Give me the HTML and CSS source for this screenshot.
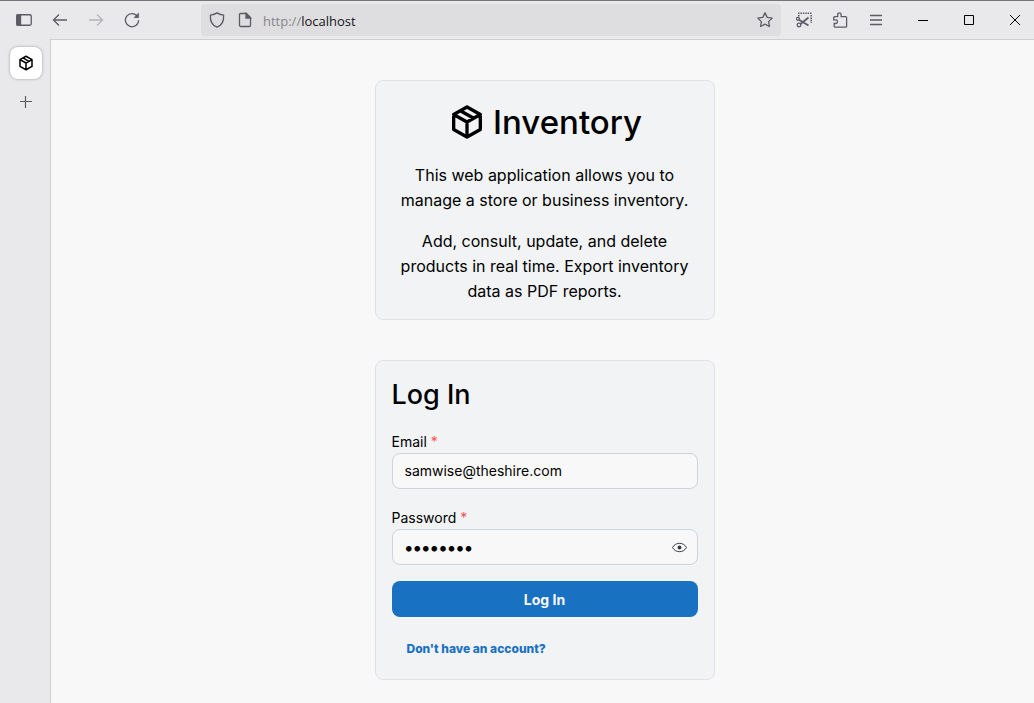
FILE: index.html
```html
<!DOCTYPE html>
<html lang="en">
<head>
<meta charset="utf-8">
<title>Inventory</title>
<link rel="stylesheet" href="styles.css">
</head>
<body>
<svg class="defs" aria-hidden="true">
  <symbol id="package" viewBox="0 0 24 24"><path d="M12 3l8 4.500v9L12 21l-8-4.500v-9L12 3M12 12l8-4.500M12 12v9M12 12L4 7.500M8 5.250l8 4.500"/></symbol>
</svg>
<div class="browser">
  <header class="toolbar">
    <nav class="nav-buttons" aria-label="Navigation">
      <button class="icon-button" aria-label="Toggle sidebar"><svg class="icon" viewBox="0 0 16 16"><rect x=".75" y="2.750" width="14.500" height="10.500" rx="1.500"/><path d="M1 3h3.500v10H1z" fill="currentColor"/></svg></button>
      <button class="icon-button" aria-label="Back"><svg class="icon" viewBox="0 0 16 16"><path d="M15 8H2M7 2.500L1.500 8 7 13.500"/></svg></button>
      <button class="icon-button muted" aria-label="Forward" disabled><svg class="icon" viewBox="0 0 16 16"><path d="M1 8h13M9 2.500L14.500 8 9 13.500"/></svg></button>
      <button class="icon-button" aria-label="Reload"><svg class="icon" viewBox="0 0 16 16"><path d="M13.500 4.500A6.600 6.600 0 1 0 14.600 8.200"/><path d="M14.600 1v4.700H9.900z" fill="currentColor" stroke-width=".5"/></svg></button>
    </nav>
    <div class="address-bar">
      <button class="site-button" aria-label="Tracking protection"><svg class="icon" viewBox="0 0 16 16"><path d="M8 .9c1.800 1.300 4 1.900 6.600 2.300.4 5.300-1.400 9.900-6.600 12C2.800 13.100 1 8.500 1.400 3.200 4 2.800 6.200 2.200 8 .9z"/></svg></button>
      <button class="site-button" aria-label="Site information"><svg class="icon" viewBox="0 0 16 16"><path d="M3.500 1.500h6l4 4v7.700a1.300 1.300 0 0 1-1.300 1.300H3.800a1.300 1.300 0 0 1-1.300-1.300V2.500a1 1 0 0 1 1-1z"/><path d="M9 1.500v4.500h4.500z" fill="currentColor"/></svg></button>
      <div class="url" role="textbox" contenteditable="true" spellcheck="false" aria-label="Address"><span class="scheme">http://</span>localhost</div>
      <button class="site-button" aria-label="Bookmark"><svg class="icon" viewBox="0 0 16 16"><path d="M8 .9l2.200 4.500 5 .7-3.600 3.500.8 4.900L8 12.200l-4.400 2.300.8-4.900L.8 6.100l5-.7z" stroke-linejoin="round"/></svg></button>
    </div>
    <div class="tools">
      <button class="icon-button" aria-label="Screenshot"><svg class="icon" viewBox="0 0 16 16"><path d="M2 1.200h14M15.200 3v8M2.800 3v2" stroke-width="1.600" stroke-dasharray="1.500 .9"/><circle cx="1.900" cy="6.800" r="1.500"/><circle cx="3" cy="13" r="1.800"/><path d="M3 7.800l9.500 5.700M4.500 12l8-6.500" stroke-width="1.800"/></svg></button>
      <button class="icon-button" aria-label="Extensions"><svg class="icon" viewBox="0 0 16 16"><path d="M2.700 4.700h3V2.500a1.700 1.700 0 0 1 3.400 0v2.200h4.500a1 1 0 0 1 1 1v8.500a1 1 0 0 1-1 1H3.200a1 1 0 0 1-1-1v-2.700h1.500a1.800 1.800 0 0 0 0-3.600H1.700V5.700a1 1 0 0 1 1-1z"/></svg></button>
      <button class="icon-button" aria-label="Menu"><svg class="icon" viewBox="0 0 16 16"><path d="M2 3.500h12M2 8h12M2 12.500h12"/></svg></button>
    </div>
    <div class="window-buttons">
      <button class="window-button" aria-label="Minimize"><svg class="window-icon" viewBox="0 0 10 10"><path d="M0 5.500h10"/></svg></button>
      <button class="window-button" aria-label="Maximize"><svg class="window-icon" viewBox="0 0 10 10"><path d="M.5.500h9v9h-9z"/></svg></button>
      <button class="window-button" aria-label="Close"><svg class="window-icon" viewBox="0 0 10 10"><path d="M0 0l10 10M10 0L0 10"/></svg></button>
    </div>
  </header>
  <div class="workspace">
    <aside class="tab-strip">
      <button class="tab" aria-label="Inventory"><svg class="package-icon small"><use href="#package"/></svg></button>
      <button class="new-tab" aria-label="New tab"><svg class="new-icon" viewBox="0 0 12 12"><path d="M5.500 0v12M0 5.500h12"/></svg></button>
    </aside>
    <main class="page">
      <section class="card intro">
        <h1 class="title"><svg class="package-icon large"><use href="#package"/></svg>Inventory</h1>
        <p class="description">This web application allows you to manage a store or business inventory.</p>
        <p class="description">Add, consult, update, and delete products in real time. Export inventory data as PDF reports.</p>
      </section>
      <form class="card login">
        <h2 class="form-title">Log In</h2>
        <div class="field">
          <label class="label" for="email">Email <span class="required">*</span></label>
          <input class="input" id="email" type="email" value="samwise@theshire.com" required>
        </div>
        <div class="field">
          <label class="label" for="password">Password <span class="required">*</span></label>
          <div class="input password-box">
            <input class="password" id="password" type="password" value="potatoes" required>
            <button class="reveal" type="button" aria-label="Show password"><svg class="eye" viewBox="0 0 15 15"><path d="M.5 7.500C2.200 4.600 4.700 3.300 7.500 3.300s5.300 1.300 7 4.200c-1.700 2.900-4.200 4.200-7 4.200S2.200 10.400.5 7.500z"/><circle cx="7.500" cy="7.500" r="1.900" fill="currentColor" stroke="none"/></svg></button>
          </div>
        </div>
        <button class="submit" type="submit">Log In</button>
        <a class="register" href="#register">Don't have an account?</a>
      </form>
    </main>
  </div>
</div>
</body>
</html>
```
FILE: styles.css
```css
* { box-sizing: border-box; }
body { margin: 0; background: #e9e9eb; font-family: Inter, "Liberation Sans", sans-serif; color: #000; }
button, input { font: inherit; color: inherit; }
button { display: flex; align-items: center; justify-content: center; padding: 0; border: 0; background: transparent; }
svg { display: block; fill: none; stroke: currentColor; }
.defs { display: none; }
.browser { display: flex; flex-direction: column; min-height: 100vh; }

.toolbar { display: flex; align-items: center; height: 39px; border-top: 1px solid #76747b; color: #5b5b66; }
.nav-buttons { display: flex; padding-left: 6px; margin-right: 51px; }
.icon-button { width: 36px; height: 32px; }
.muted { color: #b4b4ba; }
.icon { width: 16px; height: 16px; stroke-width: 1.3; }
.address-bar { display: flex; flex: 1; align-items: center; height: 32px; padding: 0 2px; border-radius: 4px; background: #dedee0; }
.site-button { width: 28px; height: 28px; }
.url { flex: 1; padding: 2px 0 0 4px; font: 13px/20px "Open Sans", "Noto Sans", sans-serif; color: #15141a; outline: 0; }
.scheme { color: #86868b; }
.tools { display: flex; padding: 0 6px 0 5px; }
.window-buttons { display: flex; margin-right: -4px; color: #000; }
.window-button { width: 46px; height: 38px; }
.window-icon { width: 10px; height: 10px; stroke-width: 1; overflow: visible; }

.workspace { display: flex; flex: 1; }
.tab-strip { display: flex; flex-direction: column; align-items: center; gap: 7px; width: 50px; padding: 8px 0 0 2px; }
.tab { width: 32px; height: 32px; border-radius: 8px; background: #fff; box-shadow: 0 0 3px rgba(0, 0, 0, .35); }
.new-tab { width: 32px; height: 32px; color: #5b5b66; }
.new-icon { width: 12px; height: 12px; stroke-width: 1.2; }
.package-icon { stroke-width: 2; stroke-linecap: round; stroke-linejoin: round; }
.small { width: 18px; height: 18px; }
.large { width: 40px; height: 40px; }

.page { display: flex; flex: 1; flex-direction: column; align-items: center; gap: 40px; padding: 40px 16px 22px 20px; border: solid #cfcfd1; border-width: 1px 0 0 1px; background: #f8f8f8; }
.card { width: 100%; max-width: 340px; padding: 16px; border: 1px solid #dee2e6; border-radius: 8px; background: #f1f3f5; }
.intro { display: flex; flex-direction: column; gap: 16px; padding-bottom: 15px; text-align: center; }
.title { display: flex; align-items: center; justify-content: center; gap: 6px; margin: 0; font-size: 33px; font-weight: 500; line-height: 50px; }
.description { margin: 0; font-size: 16px; line-height: 25px; }
.login { display: flex; flex-direction: column; gap: 16px; }
.form-title { margin: 0; font-size: 27px; font-weight: 500; line-height: 36px; }
.field { display: flex; flex-direction: column; padding-top: 2px; }
.label { font-size: 14px; line-height: 22px; }
.required { color: #fa5252; }
.input { width: 100%; height: 36px; padding: 0 12px 1px; border: 1px solid #ced4da; border-radius: 8px; background: #f8f8f8; font-size: 14px; outline: 0; }
.password-box { display: flex; align-items: center; padding: 0 3px 0 12px; }
.password { flex: 1; min-width: 0; padding: 0; border: 0; background: transparent; font-size: 18px; font-weight: 700; outline: 0; }
.reveal { width: 28px; height: 28px; color: #343a40; }
.eye { width: 15px; height: 15px; stroke-width: 1; }
.submit { height: 36px; border-radius: 8px; background: #1971c2; color: #f8f8f8; font-size: 14px; font-weight: 700; }
.register { align-self: flex-start; padding: 0 15px; color: #1971c2; font-size: 12px; font-weight: 800; line-height: 32px; margin-bottom: -2px; text-decoration: none; }
```
